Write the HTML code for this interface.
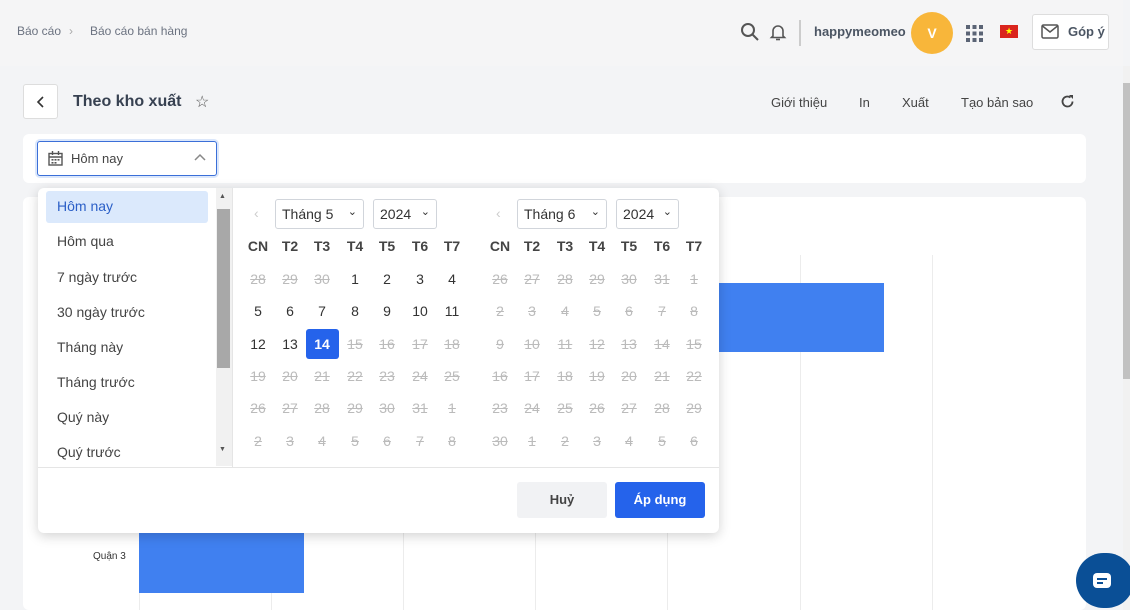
<!DOCTYPE html>
<html><head><meta charset="utf-8"><style>
*{box-sizing:border-box;margin:0;padding:0}
body{width:1130px;height:610px;overflow:hidden;background:#f3f4f6;font-family:"Liberation Sans",sans-serif;color:#333;position:relative}
.a{position:absolute}
.top{left:0;top:0;width:1123px;height:66px;background:#f5f5f6}
.crumb{font-size:12px;color:#6b7280;top:24px}
.grid{background:#fff}
.gl{position:absolute;top:255px;width:1px;height:355px;background:#ececec}
.bar{background:#4080f0}
.day{position:absolute;width:32px;text-align:center;font-size:14px;color:#333}
.dis{color:#bbb;text-decoration:line-through}
.hd{font-weight:bold;color:#444}
.sel{position:absolute;height:30px;border:1px solid #d1d5db;border-radius:3px;font-size:14px;padding:6px 6px;color:#333;background:#fff}
.li{position:absolute;left:57px;font-size:14px;color:#444}
</style></head><body>
<div class="a top"></div>
<div class="a crumb" style="left:17px">Báo cáo</div>
<div class="a crumb" style="left:69px;color:#aaa">›</div>
<div class="a crumb" style="left:90px">Báo cáo bán hàng</div>
<svg class="a" style="left:740px;top:22px" width="20" height="20" viewBox="0 0 20 20"><circle cx="8" cy="8" r="6" fill="none" stroke="#555" stroke-width="2"/><path d="M12.5 12.5 18 18" stroke="#555" stroke-width="2"/></svg>
<svg class="a" style="left:769px;top:22px" width="18" height="20" viewBox="0 0 18 20"><path d="M4 14V9a5 5 0 0110 0v5l1.5 1.5h-13z" fill="none" stroke="#555" stroke-width="1.6"/><path d="M7 17.5h4" stroke="#555" stroke-width="1.6"/></svg>
<div class="a" style="left:799px;top:20px;width:2px;height:26px;background:#ccc"></div>
<div class="a" style="left:814px;top:24px;font-size:13px;font-weight:bold;color:#4b5563">happymeomeo</div>
<div class="a" style="left:911px;top:12px;width:42px;height:42px;border-radius:50%;background:#f8b63a;color:#fff;font-weight:bold;font-size:14px;text-align:center;line-height:42px">V</div>
<svg class="a" style="left:966px;top:25px" width="17" height="17"><g fill="#5b6475"><rect x="0" y="0" width="4" height="4"/><rect x="6.5" y="0" width="4" height="4"/><rect x="13" y="0" width="4" height="4"/><rect x="0" y="6.5" width="4" height="4"/><rect x="6.5" y="6.5" width="4" height="4"/><rect x="13" y="6.5" width="4" height="4"/><rect x="0" y="13" width="4" height="4"/><rect x="6.5" y="13" width="4" height="4"/><rect x="13" y="13" width="4" height="4"/></g></svg>
<div class="a" style="left:1000px;top:25px;width:18px;height:13px;background:#da251d;color:#ff0;font-size:9px;text-align:center;line-height:13px">★</div>
<div class="a" style="left:1032px;top:14px;width:77px;height:36px;background:#fff;border:1px solid #ddd;border-radius:3px"></div>
<svg class="a" style="left:1041px;top:24px" width="18" height="15"><rect x="1" y="1" width="16" height="13" rx="1.5" fill="none" stroke="#555" stroke-width="1.5"/><path d="M1.5 2l7.5 6 7.5-6" fill="none" stroke="#555" stroke-width="1.5"/></svg>
<div class="a" style="left:1068px;top:24px;font-size:13px;font-weight:bold;color:#4b5563">Góp ý</div>
<div class="a" style="left:1123px;top:66px;width:7px;height:544px;background:#f1f1f1"></div>
<div class="a" style="left:1123px;top:83px;width:7px;height:296px;background:#c1c1c1"></div>

<div class="a" style="left:23px;top:84px;width:35px;height:35px;background:#fff;border:1px solid #ddd;border-radius:3px"></div>
<svg class="a" style="left:36px;top:96px" width="10" height="12"><path d="M7 1 2 6l5 5" fill="none" stroke="#333" stroke-width="1.6"/></svg>
<div class="a" style="left:73px;top:93px;font-size:16px;font-weight:bold;color:#374151">Theo kho xuất</div>
<div class="a" style="left:195px;top:92px;font-size:16px;color:#555">☆</div>
<div class="a" style="left:771px;top:95px;font-size:13px;color:#444">Giới thiệu</div>
<div class="a" style="left:859px;top:95px;font-size:13px;color:#444">In</div>
<div class="a" style="left:902px;top:95px;font-size:13px;color:#444">Xuất</div>
<div class="a" style="left:961px;top:95px;font-size:13px;color:#444">Tạo bản sao</div>
<svg class="a" style="left:1060px;top:94px" width="15" height="15" viewBox="0 0 15 15"><path d="M12.5 7.5A5 5 0 1110.5 3.5" fill="none" stroke="#444" stroke-width="1.8"/><path d="M9 1h4v4z" fill="#444"/></svg>

<div class="a" style="left:23px;top:134px;width:1063px;height:49px;background:#fff;border-radius:6px"></div>
<div class="a" style="left:37px;top:141px;width:180px;height:35px;border:1px solid #3b6fd8;border-radius:3px;box-shadow:0 0 0 2px #dbe7fb;background:#fff"></div>
<svg class="a" style="left:48px;top:151px" width="15" height="15"><rect x="1" y="2.5" width="13" height="11.5" fill="none" stroke="#555" stroke-width="1.4"/><path d="M1 6h13M4.5 0v4M10.5 0v4" stroke="#555" stroke-width="1.4"/><g fill="#555"><rect x="3.5" y="8" width="2" height="1.6"/><rect x="6.5" y="8" width="2" height="1.6"/><rect x="9.5" y="8" width="2" height="1.6"/><rect x="3.5" y="11" width="2" height="1.6"/><rect x="6.5" y="11" width="2" height="1.6"/></g></svg>
<div class="a" style="left:71px;top:151px;font-size:13px;color:#444">Hôm nay</div>
<svg class="a" style="left:194px;top:153px" width="12" height="8"><path d="M1 7l5-5 5 5" fill="none" stroke="#888" stroke-width="1.5"/></svg>

<div class="a grid" style="left:23px;top:197px;width:1063px;height:413px;border-radius:6px"></div>
<div class="gl" style="left:139px"></div><div class="gl" style="left:271px"></div><div class="gl" style="left:403px"></div><div class="gl" style="left:535px"></div><div class="gl" style="left:667px"></div><div class="gl" style="left:800px"></div><div class="gl" style="left:932px"></div>
<div class="a bar" style="left:139px;top:283px;width:745px;height:69px"></div>
<div class="a bar" style="left:139px;top:532px;width:165px;height:61px"></div>
<div class="a" style="left:93px;top:551px;font-size:10px;color:#333">Quận 3</div>

<div class="a" style="left:1076px;top:553px;width:58px;height:55px;border-radius:28px;background:#0a4f96"></div>
<div class="a" style="left:1093px;top:573px;width:18px;height:15px;border-radius:4px;background:#fff"></div>
<div class="a" style="left:1097px;top:578px;width:10px;height:2px;background:#0a4f96"></div>
<div class="a" style="left:1097px;top:582px;width:6px;height:2px;background:#0a4f96"></div>

<div class="a" style="left:38px;top:188px;width:681px;height:345px;background:#fff;border-radius:6px;box-shadow:0 3px 12px rgba(0,0,0,.18)"></div>
<div class="a" style="left:46px;top:191px;width:162px;height:32px;background:#dbe9fc;border-radius:3px"></div>
<div class="li" style="top:198px;color:#2b5fc7">Hôm nay</div>
<div class="li" style="top:233px">Hôm qua</div>
<div class="li" style="top:269px">7 ngày trước</div>
<div class="li" style="top:304px">30 ngày trước</div>
<div class="li" style="top:339px">Tháng này</div>
<div class="li" style="top:374px">Tháng trước</div>
<div class="li" style="top:409px">Quý này</div>
<div class="li" style="top:444px">Quý trước</div>
<div class="a" style="left:216px;top:188px;width:16px;height:278px;background:#f1f1f1"></div>
<div class="a" style="left:217px;top:209px;width:13px;height:159px;background:#a8a8a8"></div>
<div class="a" style="left:219px;top:193px;font-size:7px;color:#555">▲</div>
<div class="a" style="left:219px;top:446px;font-size:7px;color:#555">▼</div>
<div class="a" style="left:232px;top:188px;width:1px;height:279px;background:#e5e5e5"></div>
<div class="a" style="left:38px;top:467px;width:681px;height:1px;background:#e5e5e5"></div>

<div class="a" style="left:254px;top:205px;font-size:14px;color:#ccc">‹</div>
<div class="sel" style="left:275px;top:199px;width:89px">Tháng 5<span style="position:absolute;right:6px;top:5px;font-size:11px">⌄</span></div>
<div class="sel" style="left:373px;top:199px;width:64px">2024<span style="position:absolute;right:6px;top:5px;font-size:11px">⌄</span></div>
<div class="a" style="left:496px;top:205px;font-size:14px;color:#ccc">‹</div>
<div class="sel" style="left:517px;top:199px;width:90px">Tháng 6<span style="position:absolute;right:6px;top:5px;font-size:11px">⌄</span></div>
<div class="sel" style="left:616px;top:199px;width:63px">2024<span style="position:absolute;right:6px;top:5px;font-size:11px">⌄</span></div>

<div class="a" style="left:306px;top:329px;width:33px;height:30px;background:#2563eb;border-radius:3px"></div>
<div id="cal"></div>
<script>
var xs1=[242,274,306,339,371,404,436],xs2=[484,516,549,581,613,646,678],ys=[238,271,303,336,368,400,433],h=['CN','T2','T3','T4','T5','T6','T7'];
var out='';
function put(x,y,t,c){out+='<div class="day '+c+'" style="left:'+x+'px;top:'+y+'px">'+t+'</div>';}
[xs1,xs2].forEach(function(xs){h.forEach(function(t,i){put(xs[i],ys[0],t,'hd');});});
var d=[28,29,30];for(var i=1;i<=31;i++)d.push(i);for(i=1;i<=8;i++)d.push(i);
d.forEach(function(v,k){var r=Math.floor(k/7)+1,c=k%7,cl='';if(k<3||k>16)cl='dis';if(k==16)cl='';
if(k==16){out+='<div class="day" style="left:'+xs1[c]+'px;top:'+ys[r]+'px;color:#fff;font-weight:bold">14</div>';return;}
put(xs1[c],ys[r],v,cl);});
var e=[26,27,28,29,30,31];for(i=1;i<=30;i++)e.push(i);for(i=1;i<=6;i++)e.push(i);
e.forEach(function(v,k){put(xs2[k%7],ys[Math.floor(k/7)+1],v,'dis');});
document.getElementById('cal').innerHTML=out;
</script>

<div class="a" style="left:517px;top:482px;width:90px;height:36px;background:#f1f2f4;border-radius:3px;text-align:center;line-height:36px;font-size:13px;font-weight:bold;color:#444">Huỷ</div>
<div class="a" style="left:615px;top:482px;width:90px;height:36px;background:#2563eb;border-radius:3px;text-align:center;line-height:36px;font-size:13px;font-weight:bold;color:#fff">Áp dụng</div>
</body></html>
